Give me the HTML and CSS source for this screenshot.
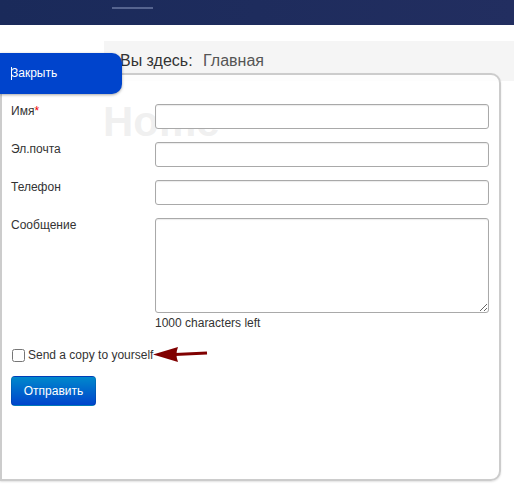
FILE: index.html
```html
<!DOCTYPE html>
<html lang="ru">
<head>
    <meta charset="UTF-8">
    <title>Главная</title>
    <link rel="stylesheet" href="styles.css">
</head>
<body>
    <div class="topbar">
        <span class="topbar-line"></span>
    </div>
    <div class="breadcrumb">
        <span class="here">Вы здесь:</span>
        <span class="crumb">Главная</span>
    </div>
    <h1 class="page-title">Home</h1>

    <div class="contact-tab"><span class="caret"></span>Закрыть</div>

    <div class="contact-panel">
        <form class="contact-form">
            <div class="row">
                <label for="name">Имя<span class="req">*</span></label>
                <input type="text" id="name">
            </div>
            <div class="row">
                <label for="email">Эл.почта</label>
                <input type="text" id="email">
            </div>
            <div class="row">
                <label for="phone">Телефон</label>
                <input type="text" id="phone">
            </div>
            <div class="row row-message">
                <label for="message">Сообщение</label>
                <textarea id="message"></textarea>
            </div>
            <div class="counter">1000 characters left</div>
            <div class="copy">
                <input type="checkbox" id="copy">
                <label for="copy">Send a copy to yourself</label>
            </div>
            <button type="button" class="send">Отправить</button>
        </form>
        <svg class="pointer" width="58" height="20" viewBox="0 0 58 20">
            <path d="M1 10.5 L26 3 Q23 10.5 26 18 Z" fill="#800000"/>
            <path d="M23 10.5 L55 9" stroke="#800000" stroke-width="3"/>
        </svg>
    </div>
</body>
</html>
```
FILE: styles.css
```css
body {
    margin: 0;
    font-family: 'Liberation Sans', Arial, sans-serif;
    color: #333;
    background: #fff;
}
.topbar {
    height: 25px;
    background: linear-gradient(to right, #1a2a5a, #222e60);
    position: relative;
}
.topbar-line {
    display: block;
    position: absolute;
    left: 112px;
    top: 7px;
    width: 41px;
    height: 2px;
    background: #56648f;
}
.breadcrumb {
    margin: 16px 0 0 104px;
    height: 40px;
    background: #f5f5f5;
    font-size: 16px;
    line-height: 18px;
    padding: 11px 0 0 16px;
    box-sizing: border-box;
}
.breadcrumb .here {
    color: #333;
    margin-right: 6px;
}
.breadcrumb .crumb {
    color: #555;
}
.page-title {
    margin: 18px 0 0 103px;
    font-size: 42px;
    line-height: 46px;
    font-weight: bold;
    color: #aaa;
}
.contact-tab {
    position: absolute;
    left: 0;
    top: 53px;
    width: 122px;
    height: 41px;
    background: #0044cc;
    color: #fff;
    font-size: 12px;
    line-height: 40px;
    padding-left: 11px;
    box-sizing: border-box;
    border-radius: 0 10px 10px 0;
    box-shadow: 0 1px 3px rgba(0,0,0,0.35);
    z-index: 2;
}
.contact-tab .caret {
    display: inline-block;
    width: 1px;
    height: 13px;
    background: #fff;
    vertical-align: -3px;
    margin-right: -1px;
}
.contact-panel {
    position: absolute;
    left: 0;
    top: 73px;
    width: 501px;
    height: 408px;
    box-sizing: border-box;
    border: 2px solid #ccc;
    border-radius: 0 10px 10px 0;
    background: rgba(255,255,255,0.82);
    box-shadow: 0 1px 2px rgba(0,0,0,0.12);
    padding: 29px 0 0 9px;
    z-index: 1;
}
.row {
    display: flex;
    margin-bottom: 13px;
}
.row label {
    width: 144px;
    font-size: 12px;
    line-height: 15px;
    color: #333;
}
.req {
    color: #e00;
}
.row input,
.row textarea {
    width: 334px;
    height: 25px;
    box-sizing: border-box;
    margin: 0;
    border: 1px solid #a9a9a9;
    border-radius: 3px;
    background: #fff;
    box-shadow: inset 0 1px 1px rgba(0,0,0,0.08);
    font-family: inherit;
}
.row textarea {
    display: block;
    height: 95px;
}
.row-message {
    margin-bottom: 0;
}
.counter {
    margin: 2px 0 0 144px;
    font-size: 12px;
    line-height: 16px;
    color: #333;
}
.copy {
    display: flex;
    align-items: center;
    height: 14px;
    margin-top: 17px;
    font-size: 12px;
    line-height: 14px;
}
.copy input {
    width: 13px;
    height: 13px;
    margin: 0 3px 0 1px;
}
.send {
    margin-top: 14px;
    width: 85px;
    height: 30px;
    padding: 0;
    font-family: inherit;
    font-size: 12px;
    color: #fff;
    border: 1px solid rgba(0,0,0,0.1);
    border-radius: 4px;
    background: linear-gradient(to bottom, #0088cc, #0044cc);
}
.pointer {
    position: absolute;
    left: 150px;
    top: 269px;
}
```
